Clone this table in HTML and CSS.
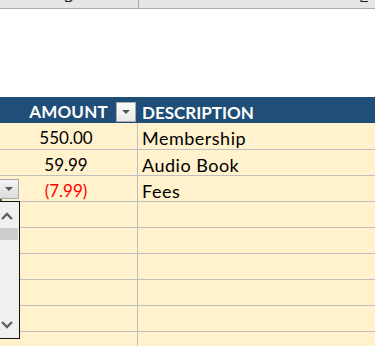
FILE: index.html
```html
<!DOCTYPE html>
<html lang="en">
<head>
    <meta charset="UTF-8">
    <meta name="viewport" content="width=device-width, initial-scale=1.0">
    <title>Transactions</title>
    <link rel="stylesheet" href="styles.css">
</head>
<body>
    <div class="col-heads">
        <div class="col-heads-inner">
            <div class="col-head col-d">D</div>
            <div class="col-head col-e">E</div>
        </div>
    </div>

    <div class="gap"></div>

    <div class="sheet">
        <div class="row head">
            <div class="cell amount">
                <span class="head-label">AMOUNT</span>
                <span class="filter-btn">
                    <svg width="8" height="4" viewBox="0 0 8 4"><path d="M0 0h8L4 4z" fill="#555"/></svg>
                </span>
            </div>
            <div class="cell desc">DESCRIPTION</div>
        </div>
        <div class="row first">
            <div class="cell amount">550.00</div>
            <div class="cell desc">Membership</div>
        </div>
        <div class="row">
            <div class="cell amount">59.99</div>
            <div class="cell desc">Audio Book</div>
        </div>
        <div class="row">
            <div class="cell amount neg">(7.99)</div>
            <div class="cell desc">Fees</div>
        </div>
        <div class="row"><div class="cell amount"></div><div class="cell desc"></div></div>
        <div class="row"><div class="cell amount"></div><div class="cell desc"></div></div>
        <div class="row"><div class="cell amount"></div><div class="cell desc"></div></div>
        <div class="row"><div class="cell amount"></div><div class="cell desc"></div></div>
        <div class="row"><div class="cell amount"></div><div class="cell desc"></div></div>
        <div class="row"><div class="cell amount"></div><div class="cell desc"></div></div>

        <!-- in-cell list picker, open on the Fees row -->
        <span class="cell-picker">
            <svg width="8" height="4" viewBox="0 0 8 4"><path d="M0 0h8L4 4z" fill="#555"/></svg>
        </span>
        <span class="cell-corner"></span>
        <div class="picker-list">
            <svg class="arrow up" width="12" height="8" viewBox="0 0 12 8"><polyline points="1,7 6,2 11,7" fill="none" stroke="#606060" stroke-width="2.4"/></svg>
            <div class="thumb"></div>
            <svg class="arrow down" width="12" height="8" viewBox="0 0 12 8"><polyline points="1,1 6,6 11,1" fill="none" stroke="#606060" stroke-width="2.4"/></svg>
        </div>
    </div>
</body>
</html>
```

FILE: styles.css
```css
body {
    margin: 0;
    width: 375px;
    height: 346px;
    overflow: hidden;
    background: white;
    font-family: Lato, "Liberation Sans", sans-serif;
}
.col-heads {
    height: 8px;
    background: #e6e6e6;
    border-bottom: 1px solid #ababab;
    overflow: hidden;
}
.col-heads-inner {
    display: flex;
    margin-top: -13px;
    height: 21px;
}
.col-head {
    font-family: "Liberation Sans", sans-serif;
    font-size: 14px;
    line-height: 21px;
    text-align: center;
    color: #222;
}
.col-d {
    width: 138px;
    flex: none;
    border-right: 1px solid #ababab;
}
.col-e {
    width: 450px;
    flex: none;
}
.gap {
    height: 88px;
}
.sheet {
    position: relative;
}
.row {
    display: flex;
    height: 25px;
    border-bottom: 1px solid #bfbfbf;
    background: #fff2cc;
}
.row.first {
    height: 26px;
}
.row.head {
    height: 26px;
    border-bottom: none;
    background: #1f4e78;
    color: white;
    font-weight: bold;
}
.cell {
    font-size: 17px;
    line-height: 26px;
    padding-top: 2px;
    box-sizing: border-box;
    white-space: nowrap;
}
.amount {
    width: 138px;
    flex: none;
    border-right: 1px solid #bfbfbf;
    text-align: center;
    padding-right: 5px;
    position: relative;
}
.head .cell {
    padding-top: 3px;
}
.head .amount {
    border-right: 1px solid #1f4e78;
    padding-right: 0;
    display: flex;
    align-items: center;
    justify-content: center;
}
.head-label {
    letter-spacing: 0.2px;
}
.desc {
    flex: 1;
    padding-left: 4px;
    font-size: 18px;
    letter-spacing: 0.5px;
}
.head .desc {
    font-size: 17px;
    letter-spacing: 0;
}
.neg {
    color: #ff0000;
}
.filter-btn {
    position: absolute;
    right: 1px;
    top: 5px;
    width: 18px;
    height: 18px;
    border: 1px solid #a9a9a9;
    background: linear-gradient(#fdfdfd, #e8e8e8);
    display: flex;
    align-items: center;
    justify-content: center;
}
.cell-picker {
    position: absolute;
    left: 0;
    top: 82px;
    width: 18px;
    height: 18px;
    border: 1px solid #a9a9a9;
    border-left: none;
    background: linear-gradient(#f4f4f4, #dcdcdc);
    display: flex;
    align-items: center;
    justify-content: center;
}
.cell-corner {
    position: absolute;
    left: 0;
    top: 102px;
    width: 2px;
    height: 2px;
    background: #217346;
}
.picker-list {
    position: absolute;
    left: 0;
    top: 104px;
    width: 19px;
    height: 136px;
    background: #f0f0f0;
    border: 1px solid #111;
    border-left: none;
}
.arrow {
    position: absolute;
    left: 1px;
}
.arrow.up {
    top: 10px;
}
.arrow.down {
    top: 119px;
}
.thumb {
    position: absolute;
    left: 0;
    top: 26px;
    width: 18px;
    height: 12px;
    background: #cdcdcd;
}
```
